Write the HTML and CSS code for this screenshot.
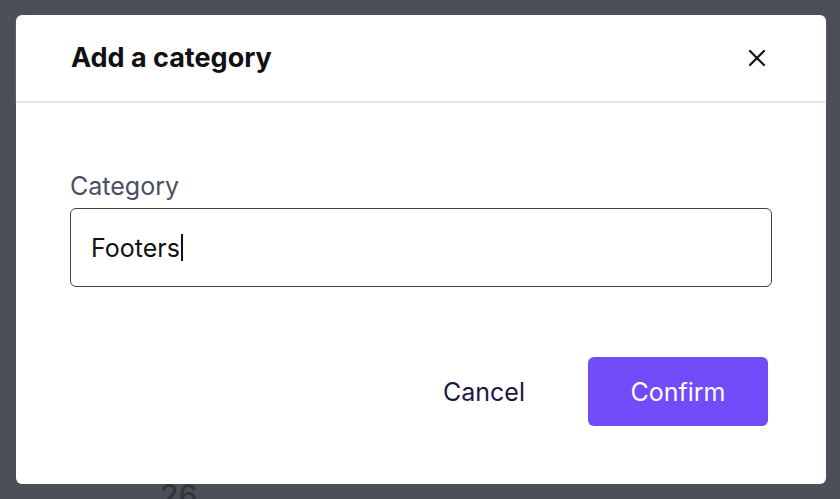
FILE: index.html
```html
<!DOCTYPE html>
<html>
<head>
<meta charset="utf-8">
<link rel="stylesheet" href="styles.css">
</head>
<body>
<div class="modal">
  <div class="modal-header">
    <h2 class="modal-title">Add a category</h2>
    <button class="close-btn" aria-label="Close">
      <svg width="18" height="18" viewBox="0 0 18 18"><path d="M2 2L16 16M16 2L2 16" stroke="#111" stroke-width="2.2" stroke-linecap="round"/></svg>
    </button>
  </div>
  <div class="modal-body">
    <label class="field-label">Category</label>
    <div class="text-input"><span class="value">Footers</span><span class="caret"></span></div>
    <div class="actions">
      <button class="btn btn-cancel">Cancel</button>
      <button class="btn btn-confirm">Confirm</button>
    </div>
  </div>
</div>
<div class="behind">26</div>
</body>
</html>
```

FILE: styles.css
```css
html, body {
  margin: 0;
  padding: 0;
  background: #4b4f58;
  font-family: "Inter", "Liberation Sans", sans-serif;
  height: 499px;
  overflow: hidden;
}
.modal {
  position: relative;
  z-index: 2;
  margin: 15px 0 0 16px;
  width: 810px;
  height: 469px;
  background: #fff;
  border-radius: 6px;
  display: flex;
  flex-direction: column;
}
.modal-header {
  height: 86px;
  display: flex;
  align-items: center;
  justify-content: space-between;
  padding: 0 60px 0 55px;
  border-radius: 6px 6px 0 0;
  box-shadow: 0 2px 1px #e4e5ea;
}
.modal-title {
  margin: 0;
  font-size: 27px;
  line-height: 32px;
  font-weight: 700;
  color: #111114;
}
.close-btn {
  border: 0;
  background: none;
  padding: 0;
  width: 18px;
  height: 18px;
  display: flex;
}
.modal-body {
  padding: 70px 54px 0 54px;
  display: flex;
  flex-direction: column;
}
.field-label {
  font-size: 25px;
  line-height: 30px;
  color: #4a5064;
  margin-left: 0;
}
.text-input {
  margin-top: 7px;
  height: 77px;
  border: 1px solid #3d4356;
  border-radius: 6px;
  display: flex;
  align-items: center;
  padding-left: 20px;
  font-size: 25px;
  color: #111;
}
.caret {
  display: inline-block;
  width: 2px;
  height: 27px;
  background: #111;
  margin-left: 1px;
}
.actions {
  margin-top: 70px;
  display: flex;
  justify-content: flex-end;
  padding-right: 4px;
}
.btn {
  font-family: inherit;
  font-size: 25px;
  height: 69px;
  border: 0;
  border-radius: 6px;
  padding: 0;
  cursor: pointer;
}
.btn-cancel {
  background: none;
  color: #1c1840;
  margin-right: 63px;
}
.btn-confirm {
  background: #724cf9;
  color: #fff;
  width: 180px;
}
.behind {
  height: 15px;
  overflow: hidden;
  padding-left: 160px;
  font-size: 30px;
  line-height: 22px;
  font-weight: 500;
  color: #30343c;
}
```
